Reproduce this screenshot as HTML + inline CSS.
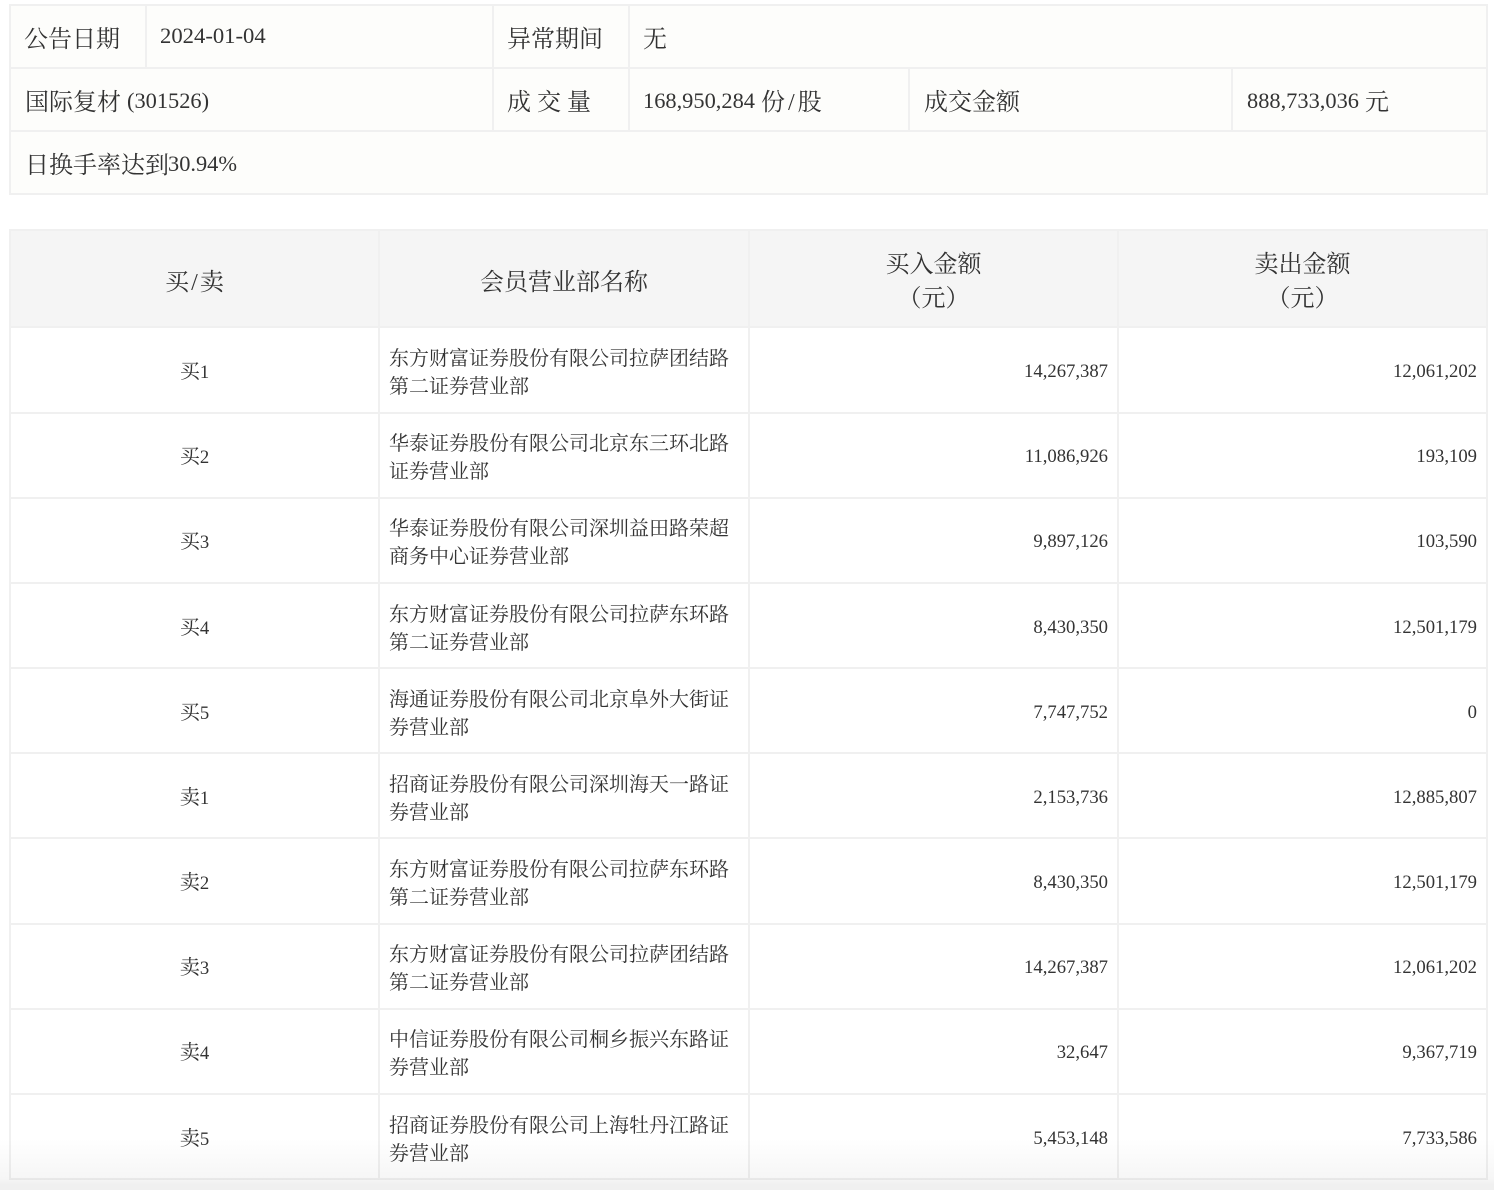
<!DOCTYPE html>
<html lang="zh-CN">
<head>
<meta charset="utf-8">
<title>龙虎榜</title>
<style>
html,body{margin:0;padding:0;background:#fff;}
body{position:relative;width:1494px;height:1190px;overflow:hidden;color:#333;font-family:"Liberation Serif","Noto Serif CJK SC",serif;}
table{position:absolute;left:9px;border-collapse:separate;border-spacing:0;table-layout:fixed;border-top:2px solid #f0f0f0;border-left:2px solid #f0f0f0;}
td,th{border-right:2px solid #f0f0f0;border-bottom:2px solid #f0f0f0;box-sizing:border-box;font-weight:normal;padding:0;}
#t1{top:4px;width:1479px;background:#fdfdfb;font-size:24px;}
#t1 td{height:63px;padding-left:14px;white-space:nowrap;}
#t1 td.a{padding-left:13px;}
#t1 tr.r2 td{padding-bottom:1px;}
#t1 i{font-style:normal;font-size:22.4px;position:relative;top:-2px;}
#t1 tr.r1 i{top:0;font-size:22.67px;}
#t1 tr.r3 i{top:-2px;left:-1px;}
#t1 b{font-weight:normal;padding:0 3px;}
#t2{top:229px;width:1479px;font-size:20px;}
#t2 th{background:#f5f5f5;font-size:24px;line-height:34px;height:97px;text-align:center;padding-top:6px;}
#t2 th.s{padding-top:8px;}
#t2 th b{font-weight:normal;padding:0 2px;}
#t2 td{line-height:28px;background:#fff;}
#t2 td i{font-style:normal;font-size:18.67px;}
#t2 td.c{text-align:center;padding-top:4px;}
#t2 td.n{padding:5px 9px 0 9px;}
#t2 td.r{text-align:right;padding:3px 9px 0 0;font-size:18.67px;}
#t2 tr.p td.c{padding-top:6px;}
#t2 tr.p td.n{padding-top:7px;}
#t2 tr.p td.r{padding-top:5px;}
#fade{position:absolute;left:0;top:1138px;width:1494px;height:52px;background:linear-gradient(to bottom,rgba(0,0,0,0) 0,rgba(0,0,0,.035) 78%,rgba(0,0,0,.06) 90%,rgba(0,0,0,.06) 100%);pointer-events:none;}
</style>
</head>
<body>
<table id="t1">
<colgroup><col style="width:136px"><col style="width:347px"><col style="width:136px"><col style="width:280px"><col style="width:323px"><col style="width:255px"></colgroup>
<tr class="r1"><td class="a">公告日期</td><td class="a"><i>2024-01-04</i></td><td class="a">异常期间</td><td class="a" colspan="3">无</td></tr>
<tr class="r2"><td colspan="2">国际复材 <i>(301526)</i></td><td class="a">成 交 量</td><td class="a"><i>168,950,284</i> 份<b>/</b>股</td><td>成交金额</td><td><i>888,733,036</i> 元</td></tr>
<tr class="r3"><td colspan="6">日换手率达到<i>30.94%</i></td></tr>
</table>
<table id="t2">
<colgroup><col style="width:369px"><col style="width:370px"><col style="width:369px"><col style="width:369px"></colgroup>
<tr><th class="s">买<b>/</b>卖</th><th class="s">会员营业部名称</th><th>买入金额<br>（元）</th><th>卖出金额<br>（元）</th></tr>
<tr style="height:86px"><td class="c">买<i>1</i></td><td class="n">东方财富证券股份有限公司拉萨团结路第二证券营业部</td><td class="r">14,267,387</td><td class="r">12,061,202</td></tr>
<tr style="height:85px"><td class="c">买<i>2</i></td><td class="n">华泰证券股份有限公司北京东三环北路证券营业部</td><td class="r">11,086,926</td><td class="r">193,109</td></tr>
<tr style="height:85px"><td class="c">买<i>3</i></td><td class="n">华泰证券股份有限公司深圳益田路荣超商务中心证券营业部</td><td class="r">9,897,126</td><td class="r">103,590</td></tr>
<tr class="p" style="height:85px"><td class="c">买<i>4</i></td><td class="n">东方财富证券股份有限公司拉萨东环路第二证券营业部</td><td class="r">8,430,350</td><td class="r">12,501,179</td></tr>
<tr class="p" style="height:85px"><td class="c">买<i>5</i></td><td class="n">海通证券股份有限公司北京阜外大街证券营业部</td><td class="r">7,747,752</td><td class="r">0</td></tr>
<tr class="p" style="height:85px"><td class="c">卖<i>1</i></td><td class="n">招商证券股份有限公司深圳海天一路证券营业部</td><td class="r">2,153,736</td><td class="r">12,885,807</td></tr>
<tr style="height:86px"><td class="c">卖<i>2</i></td><td class="n">东方财富证券股份有限公司拉萨东环路第二证券营业部</td><td class="r">8,430,350</td><td class="r">12,501,179</td></tr>
<tr style="height:85px"><td class="c">卖<i>3</i></td><td class="n">东方财富证券股份有限公司拉萨团结路第二证券营业部</td><td class="r">14,267,387</td><td class="r">12,061,202</td></tr>
<tr style="height:85px"><td class="c">卖<i>4</i></td><td class="n">中信证券股份有限公司桐乡振兴东路证券营业部</td><td class="r">32,647</td><td class="r">9,367,719</td></tr>
<tr class="p" style="height:85px"><td class="c">卖<i>5</i></td><td class="n">招商证券股份有限公司上海牡丹江路证券营业部</td><td class="r">5,453,148</td><td class="r">7,733,586</td></tr>
</table>
<div id="fade"></div>
</body>
</html>
